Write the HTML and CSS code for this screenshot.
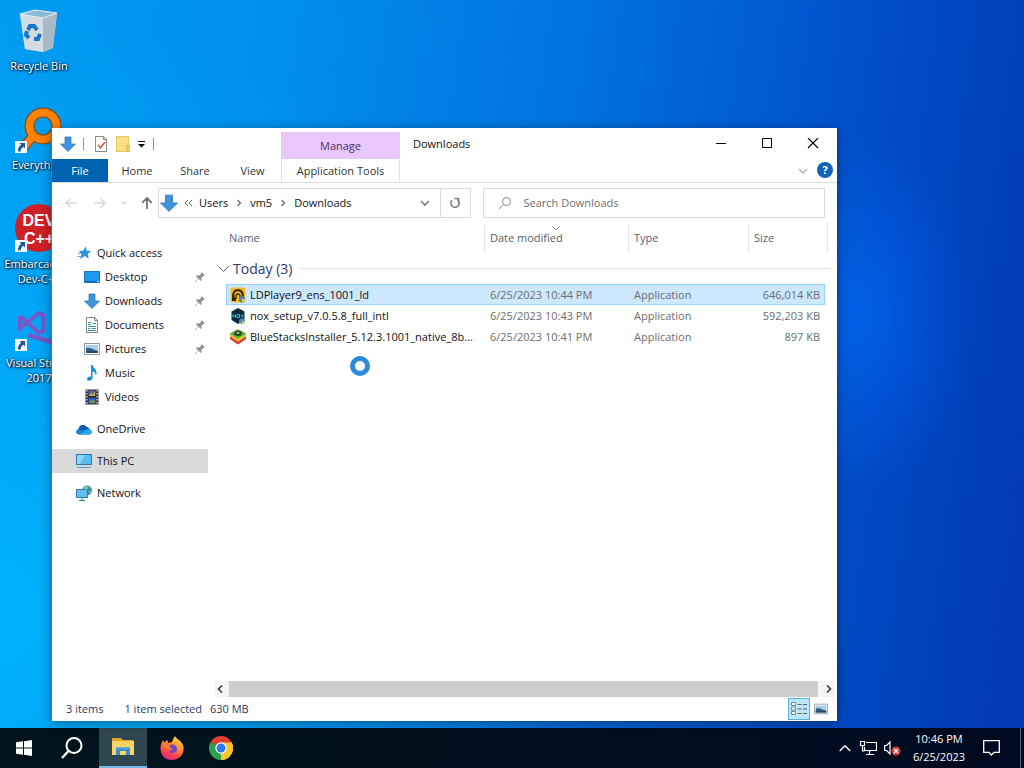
FILE: index.html
```html
<!DOCTYPE html>
<html lang="en">
<head>
<meta charset="utf-8">
<title>Downloads</title>
<link rel="stylesheet" href="styles.css">
</head>
<body>
<svg class="defs" aria-hidden="true">
  <defs>
    <symbol id="down" viewBox="0 0 16 16"><path d="M5 1h6v7h4.500L8 15.500.500 8H5z" fill="#3f93dd" stroke="#2b78c0" stroke-width=".8"/></symbol>
    <symbol id="pin" viewBox="0 0 12 12"><path d="M7.500 1l3.500 3.500-1 .6-.6-.2-2 2 .2 2.400-.9.700-2.200-2.200L1 11.200l-.3-.3L4 7.400 1.900 5.200l.8-.8 2.500.2 2-2-.2-.7z" fill="#8f959b"/></symbol>
    <symbol id="picture" viewBox="0 0 16 16"><path d="M.5 2.500h15v11H.5z" fill="#fff" stroke="#8f9aa5"/><path d="M2 4h12v8H2z" fill="#a9cdea"/><path d="M2 7l4 0 8 3v2H2z" fill="#2e6488"/><path d="M2 10h12v2H2z" fill="#284b62"/></symbol>
    <symbol id="shortcut" viewBox="0 0 12 12"><path d="M0 0h12v12H0z" fill="#f4f8fc"/><path d="M4.500 2H10v5.500L8.300 5.800C6.500 7 5.700 8.300 5.600 10.500H3C2.800 7.500 4 5.300 6.200 3.800z" fill="#22569c"/></symbol>
  </defs>
</svg>

<main class="desktop">
  <nav class="shortcuts" aria-label="Desktop">
    <a class="shortcut" href="#recycle">
      <svg class="big" viewBox="0 0 48 48"><path d="M5 8l15-4 22 3-4 35-10 4-18-3z" fill="#b9c9d4"/><path d="M5 8l23 4v34l-18-3z" fill="#d5dde2"/><path d="M28 12l14-5-4 35-10 4z" fill="#a9b9c5"/><path d="M5 8l15-4 22 3-14 5z" fill="#8cbbd6" stroke="#dfeaf0" stroke-width="1.200"/><g fill="none" stroke="#1676c5" stroke-width="4"><path d="M13 24l2-4h4l3 4M25 28l-2 5h-4M14 32l-3-3 1-4"/></g></svg>
      <span>Recycle Bin</span>
    </a>
    <a class="shortcut" href="#everything">
      <svg class="big" viewBox="0 0 48 48"><g fill="none" stroke="#8a4a12" stroke-width="10"><circle cx="28" cy="21" r="13.500"/><path d="M18 31L7 44"/></g><g fill="none" stroke="#ff8205" stroke-width="7.500"><circle cx="28" cy="21" r="13.500"/><path d="M19 30L8 43"/></g></svg>
      <svg class="arrow"><use href="#shortcut"/></svg>
      <span>Everything</span>
    </a>
    <a class="shortcut" href="#devcpp">
      <span class="big devlogo">DEV<br>C++</span>
      <svg class="arrow"><use href="#shortcut"/></svg>
      <span>Embarcadero Dev-C++</span>
    </a>
    <a class="shortcut" href="#vs">
      <svg class="big" viewBox="0 0 48 48"><g fill="none" stroke="#7857c8" stroke-width="4"><path d="M5 13v12l19-15 4 2v16l-4 2L5 13"/></g><path d="M14 30l34 10v5L12 34z" fill="#7857c8"/></svg>
      <svg class="arrow"><use href="#shortcut"/></svg>
      <span>Visual Studio 2017</span>
    </a>
  </nav>

  <section class="window" aria-label="Downloads">
    <header class="titlebar">
      <div class="quickbar">
        <svg class="i16"><use href="#down"/></svg>
        <i class="bar"></i>
        <button class="plain" aria-label="Properties"><svg class="i16" viewBox="0 0 16 16"><path d="M2.500.5h8l3 3v12h-11z" fill="#fff" stroke="#8a8a8a"/><path d="M10.500.5v3h3" fill="none" stroke="#8a8a8a"/><path d="M5 9l2.500 3L12 6" fill="none" stroke="#c8542e" stroke-width="1.300"/></svg></button>
        <button class="plain" aria-label="New folder"><svg class="i16" viewBox="0 0 16 16"><path d="M1.500.5h12v8l1 1v6h-13z" fill="#fbdf83" stroke="#ecc965"/><path d="M11.500 9.500h3v6h-3z" fill="#f4cf6a" stroke="#dfb950"/></svg></button>
        <button class="plain more" aria-label="Customize"><svg width="9" height="8" viewBox="0 0 9 8"><path d="M1 1.500h7" stroke="#000"/><path d="M1 4h7L4.500 7.500z"/></svg></button>
        <i class="bar"></i>
      </div>
      <div class="manage">Manage</div>
      <h1>Downloads</h1>
      <div class="controls">
        <button aria-label="Minimize"><svg width="12" height="12" viewBox="0 0 12 12"><path d="M1 5.500h10" stroke="#000"/></svg></button>
        <button aria-label="Maximize"><svg width="12" height="12" viewBox="0 0 12 12"><path d="M1.500.5h9v9h-9z" fill="none" stroke="#000"/></svg></button>
        <button aria-label="Close"><svg width="12" height="12" viewBox="0 0 12 12"><path d="M1 0l10 10M11 0L1 10" stroke="#000" stroke-width="1.100"/></svg></button>
      </div>
    </header>
    <div class="tabs">
      <button class="file">File</button>
      <button>Home</button>
      <button>Share</button>
      <button class="viewtab">View</button>
      <button class="tools">Application Tools</button>
      <button class="plain expand" aria-label="Expand ribbon"><svg width="10" height="8" viewBox="0 0 10 8"><path d="M1 2l4 4 4-4" fill="none" stroke="#b0b0b0" stroke-width="1.400"/></svg></button>
      <button class="help" aria-label="Help">?</button>
    </div>

    <div class="navrow">
      <div class="arrows">
        <button class="plain" aria-label="Back"><svg class="i14" viewBox="0 0 14 14"><path d="M13 7H2M6.500 2.500L2 7l4.500 4.500" fill="none" stroke="#dadada" stroke-width="1.400"/></svg></button>
        <button class="plain forward" aria-label="Forward"><svg class="i14" viewBox="0 0 14 14"><path d="M1 7h11M7.500 2.500L12 7l-4.500 4.500" fill="none" stroke="#dadada" stroke-width="1.400"/></svg></button>
        <button class="plain" aria-label="Recent"><svg width="8" height="8" viewBox="0 0 8 8"><path d="M1.500 2.500L4 5l2.500-2.500" fill="none" stroke="#dadada" stroke-width="1.300"/></svg></button>
        <button class="plain" aria-label="Up"><svg class="i14" viewBox="0 0 14 14"><path d="M7 13V2M2.200 6.800L7 2l4.800 4.800" fill="none" stroke="#707070" stroke-width="1.800"/></svg></button>
      </div>
      <div class="address">
        <svg class="i18"><use href="#down"/></svg>
        <svg width="9" height="8" viewBox="0 0 9 8"><path d="M4 1L1 4l3 3M8 1L5 4l3 3" fill="none" stroke="#666"/></svg>
        <a href="#users">Users</a>
        <svg width="6" height="8" viewBox="0 0 6 8"><path d="M1.500 1l3 3-3 3" fill="none" stroke="#666" stroke-width="1.200"/></svg>
        <a class="sub" href="#vm5">vm5</a>
        <svg width="6" height="8" viewBox="0 0 6 8"><path d="M1.500 1l3 3-3 3" fill="none" stroke="#666" stroke-width="1.200"/></svg>
        <a class="sub" href="#downloads">Downloads</a>
        <button class="plain history" aria-label="Previous locations"><svg width="10" height="8" viewBox="0 0 10 8"><path d="M1 2l4 4 4-4" fill="none" stroke="#808080" stroke-width="1.600"/></svg></button>
        <button class="refresh" aria-label="Refresh"><svg width="12" height="12" viewBox="0 0 12 12"><path d="M3 3.200A4.200 4.200 0 1 0 8.500 2.700" fill="none" stroke="#777" stroke-width="1.500"/><path d="M5.500 1.500h4v4" fill="none" stroke="#777" stroke-width="1.500"/></svg></button>
      </div>
      <label class="search">
        <svg width="14" height="14" viewBox="0 0 14 14"><circle cx="8.500" cy="5.500" r="4" fill="none" stroke="#8a8a8a"/><path d="M5.600 8.400L1 13" stroke="#8a8a8a"/></svg>
        <input type="text" placeholder="Search Downloads" aria-label="Search Downloads">
      </label>
    </div>

    <div class="body">
      <nav class="tree" aria-label="Folders">
        <a class="root" href="#quick"><svg class="i16" viewBox="0 0 16 16"><path d="M9.500 1.500l1.300 4.300 4.600.2-3.800 2.900 1.200 4.800L9 11l-5 3 1.600-4.800L2.800 6l4.400-.2z" fill="#2a93dc"/><path d="M2 8.500h4M1.500 11.500h4" stroke="#5eb4ea"/></svg>Quick access</a>
        <a href="#desktop"><svg class="i16" viewBox="0 0 16 16"><path d="M.5 2.500h15v11H.5z" fill="#1e97f2" stroke="#1673bd"/><path d="M1 12.500h12" stroke="#1565ac"/><path d="M13 12.500h2" stroke="#d7efff"/></svg>Desktop<svg class="pin"><use href="#pin"/></svg></a>
        <a href="#dl"><svg class="i16"><use href="#down"/></svg>Downloads<svg class="pin"><use href="#pin"/></svg></a>
        <a href="#docs"><svg class="i16" viewBox="0 0 16 16"><path d="M2.500.5h8l3 3v12h-11z" fill="#fff" stroke="#7d8790"/><path d="M10.500.5v3h3" fill="none" stroke="#7d8790"/><path d="M4 7.500h3M4 5.500h3M8.500 6.500H12M4 9.500h8M4 11.500h2M7.500 11.500H12M4 13.500h8" stroke="#3c91a6"/></svg>Documents<svg class="pin"><use href="#pin"/></svg></a>
        <a href="#pics"><svg class="i16"><use href="#picture"/></svg>Pictures<svg class="pin"><use href="#pin"/></svg></a>
        <a href="#music"><svg class="i16" viewBox="0 0 16 16"><path d="M7 0h1.500c.5 3 4.500 4 4 8.500-.2 1-.7 1.500-1 2 .2-2.500-1-3.500-3-4V13c0 3-5.500 4-5.500 1 0-2 2.500-3 4-2.300z" fill="#1690dc"/></svg>Music</a>
        <a href="#videos"><svg class="i16" viewBox="0 0 16 16"><path d="M1.500.5h13v15h-13z" fill="#2b2d38"/><path d="M4.500 1.500h7V7h-7z" fill="#54659a"/><path d="M4.500 9h7v5.500h-7z" fill="#2f62c8"/><path d="M5 6.500l2.500-3L9 6l2-4v5H5z" fill="#c2b04a"/><path d="M5 14l2-3 4 1v2z" fill="#7a9a50"/><path d="M3 1v14M13 1v14" stroke="#e8e8e8" stroke-width="1.200" stroke-dasharray="1.500 1.500"/></svg>Videos</a>
        <a class="root" href="#onedrive"><svg class="i16" viewBox="0 0 16 16"><path d="M3 13.500C-.8 13.500-.8 8.500 2.600 8 3.200 3.500 8.500 2.500 10.500 6c1.200-.2 2.300.6 2.600 2 3.500.5 3.500 5.500 0 5.500z" fill="#1484dc"/><path d="M2.600 8C3.200 3.500 8.500 2.500 10.500 6c1.200-.2 2.300.6 2.600 2L9 9.500z" fill="#0a5cb0"/><path d="M3 13.500l7-4.500c3-1.700 5.800 0 5.600 2.300-.1 1.500-1.200 2.200-2.500 2.200z" fill="#2aa4ed"/></svg>OneDrive</a>
        <a class="root current" href="#pc"><svg class="i16" viewBox="0 0 16 16"><path d="M.5 1.500h15v10H.5z" fill="#56bdf0" stroke="#35759c"/><path d="M1 2h8L4 11H1z" fill="#8ad6fa"/><path d="M1 14.500h14" stroke="#5a9fd0"/></svg>This PC</a>
        <a class="root" href="#network"><svg class="i16" viewBox="0 0 16 16"><circle cx="11" cy="5.500" r="5" fill="#3f8fa8"/><path d="M8 2c2-2 5 0 4 2s-3 1-4 0M13 6l2.500 0-1 3z" fill="#86c9a8"/><path d="M.5 4.500h11v8H.5z" fill="#5fc0f0" stroke="#2e7cab"/><path d="M6 13v2M3 15.500h6" stroke="#2e7cab"/></svg>Network</a>
      </nav>

      <div class="pane">
        <div class="list">
          <table>
            <colgroup><col><col class="c-date"><col class="c-type"><col class="c-size"></colgroup>
            <thead>
              <tr><th>Name</th><th class="sorted">Date modified<svg width="8" height="5" viewBox="0 0 8 5"><path d="M.5.5L4 4 7.500.5" fill="none" stroke="#777"/></svg></th><th>Type</th><th>Size</th></tr>
            </thead>
            <tbody>
              <tr class="group"><td colspan="4"><div><svg width="11" height="8" viewBox="0 0 11 8"><path d="M.5 1.500l5 5 5-5" fill="none" stroke="#555"/></svg><b>Today (3)</b><hr></div></td></tr>
              <tr class="selected"><td><div class="name"><svg class="i16" viewBox="0 0 16 16"><rect x=".5" y=".5" width="15" height="15" rx="2" fill="#f5bd1b"/><path d="M3.200 12V8a4.800 4.800 0 0 1 9.600 0v3" fill="none" stroke="#302414" stroke-width="2.200"/><path d="M6 12V9a2 2 0 0 1 4 0v2" fill="none" stroke="#302414" stroke-width="1.300"/><path d="M2 10.500h4V14H2z" fill="#302414"/><path d="M9 10.500l3-2 3 2v4l-3 1.500-3-1.500z" fill="#4c83b8"/><path d="M12 12h3v2.500L12 16z" fill="#ecc94d"/></svg>LDPlayer9_ens_1001_ld</div></td><td>6/25/2023 10:44 PM</td><td>Application</td><td>646,014 KB</td></tr>
              <tr><td><div class="name"><svg class="i16" viewBox="0 0 16 16"><path d="M8 0l6.500 3.500v8L8 16l-6.500-4V3.500z" fill="#0e2b3e"/><path d="M3 9.500v-3l2.500 3v-3M7 6.500h2.500v3H7zM11 6.500l2.500 3M13.500 6.500l-2.500 3" fill="none" stroke="#35b5c9"/><path d="M9 12l3-2 3 2v2.500L12 16l-3-1.500z" fill="#5189b9"/><path d="M12 13h3v1.500L12 16z" fill="#d4c467"/></svg>nox_setup_v7.0.5.8_full_intl</div></td><td>6/25/2023 10:43 PM</td><td>Application</td><td>592,203 KB</td></tr>
              <tr><td><div class="name"><svg class="i16" viewBox="0 0 16 16"><path d="M0 10l8 5.500 8-5.500V8H0z" fill="#d5332d"/><path d="M0 7.500L8 13l8-5.500V6H0z" fill="#f5b52a"/><path d="M0 5.500l8 5.500 8-5.500v-1H0z" fill="#b9d44a"/><path d="M0 4.500L8 0l8 4.500-8 5z" fill="#59a532"/><ellipse cx="8" cy="4.500" rx="3.600" ry="2.400" fill="#25401f"/><ellipse cx="8" cy="4" rx="1.600" ry="1" fill="#9fd0dd"/></svg>BlueStacksInstaller_5.12.3.1001_native_8b...</div></td><td>6/25/2023 10:41 PM</td><td>Application</td><td>897 KB</td></tr>
            </tbody>
          </table>
        </div>
        <div class="scroll">
          <button class="left" aria-label="Scroll left"><svg width="6" height="8" viewBox="0 0 6 8"><path d="M5 .5L1.500 4 5 7.500" fill="none" stroke="#444" stroke-width="1.700"/></svg></button>
          <div class="thumb"></div>
          <button class="right" aria-label="Scroll right"><svg width="6" height="8" viewBox="0 0 6 8"><path d="M1 .5L4.500 4 1 7.500" fill="none" stroke="#444" stroke-width="1.700"/></svg></button>
        </div>
      </div>
    </div>

    <footer class="status">
      <span>3 items</span>
      <span class="picked">1 item selected</span>
      <span>630 MB</span>
      <button class="view on" aria-label="Details"><svg width="16" height="14" viewBox="0 0 16 14"><path d="M.5.500h4v3h-4zM.5 5h4v3h-4zM.5 9.500h4v3h-4z" fill="#fff" stroke="#6d8996"/><path d="M6.500 2.500h4M12 2.500h4M6.500 7h4M12 7h4M6.500 11.500h4M12 11.500h4" stroke="#4c6570"/></svg></button>
      <button class="view" aria-label="Large icons"><svg width="14" height="14"><use href="#picture"/></svg></button>
    </footer>
  </section>
  <span class="busy" role="status" aria-label="Busy"></span>
</main>

<footer class="taskbar">
  <button class="task" aria-label="Start"><svg width="16" height="16" viewBox="0 0 16 16"><path d="M0 2.300L7 1.300v6.200H0zM8 1.200L16 0v7.500H8zM0 8.500h7v6.200l-7-1zM8 8.500h8V16l-8-1.200z" fill="#fff"/></svg></button>
  <button class="task find" aria-label="Search"><svg width="22" height="22" viewBox="0 0 22 22"><circle cx="13" cy="8.500" r="7.500" fill="none" stroke="#fff" stroke-width="2"/><path d="M7.700 13.800L1 21" stroke="#fff" stroke-width="2.300"/></svg></button>
  <button class="task active" aria-label="File Explorer"><svg width="22" height="20" viewBox="0 0 22 20"><path d="M0 1h9l2 2h10v4H0z" fill="#e4a32b"/><path d="M0 4h22v14H0z" fill="#fcd462"/><path d="M4 18v-8h14v8h-4v-4H8v4z" fill="#3b8fc9"/><path d="M4 10h14v2H4z" fill="#59a9d9"/></svg></button>
  <button class="task" aria-label="Firefox"><svg width="24" height="24" viewBox="0 0 24 24"><defs><linearGradient id="ff" x1=".8" y1="0" x2=".3" y2="1"><stop offset="0" stop-color="#ffe14a"/><stop offset=".45" stop-color="#ff8a2a"/><stop offset=".8" stop-color="#ff3852"/><stop offset="1" stop-color="#e0268c"/></linearGradient></defs><path d="M15 0c1 3 6 4 8 9 2.500 8-3 15-11 15S-.5 18 .7 10C1 7.500 2 5.500 3.500 4l.5 2.500L7.500 4 8 7l4-1c1-2.500 1.500-4 3-6z" fill="url(#ff)"/><path d="M7.500 10C10 7 16 8 17 12c1 5-6 7-8.500 3l4-1-1-2z" fill="#7546c9"/><path d="M3 8c2-2 4-1.500 5-1l4 .5c-1 2-3 2-3 3l1 1.500c-2 1-3 2-2.500 3z" fill="#ff7c2b"/></svg></button>
  <button class="task" aria-label="Chrome"><svg width="24" height="24" viewBox="0 0 24 24"><path d="M12 12L1.600 6A12 12 0 0 1 22.400 6z" fill="#e63e31"/><path d="M12 12l10.400-6A12 12 0 0 1 12 24z" fill="#fcc62b"/><path d="M12 12v12A12 12 0 0 1 1.600 6z" fill="#2da04b"/><path d="M12 6.500h10.700A12 12 0 0 1 12 24l5-9z" fill="#fcc62b"/><circle cx="12" cy="12" r="5.700" fill="#fff"/><circle cx="12" cy="12" r="4.500" fill="#2d79ea"/></svg></button>
  <div class="tray">
    <button class="hidden-icons" aria-label="Show hidden icons"><svg width="12" height="8" viewBox="0 0 12 8"><path d="M.7 7L6 1.700 11.300 7" fill="none" stroke="#fff" stroke-width="1.400"/></svg></button>
    <button class="plain" aria-label="Network"><svg width="17" height="14" viewBox="0 0 17 14"><path d="M6 1.500h10.500v8h-12V6M9.500 10v3M6 13.500h8" fill="none" stroke="#fff" stroke-width="1.200"/><path d="M.5.500h4v4h-4zM2.500 5v5h2" fill="none" stroke="#fff" stroke-width="1.200"/></svg></button>
    <button class="plain" aria-label="Volume muted"><svg width="17" height="15" viewBox="0 0 17 15"><path d="M.7 4.500h2L6 1v12L2.700 9.500h-2z" fill="none" stroke="#fff" stroke-width="1.200"/><circle cx="12" cy="10" r="4.500" fill="#d23c3c"/><path d="M10 8l4 4M14 8l-4 4" stroke="#fff" stroke-width="1.300"/></svg></button>
    <div class="clock"><span>10:46 PM</span><span>6/25/2023</span></div>
    <button class="plain notes" aria-label="Notifications"><svg width="17" height="16" viewBox="0 0 17 16"><path d="M.7.700h15.600v11.600H11L8.500 15 6 12.300H.7z" fill="none" stroke="#fff" stroke-width="1.300"/></svg></button>
    <i class="peek"></i>
  </div>
</footer>
</body>
</html>
```
FILE: styles.css
```css
* { box-sizing: border-box; }
body {
  margin: 0;
  height: 100vh;
  display: flex;
  flex-direction: column;
  overflow: hidden;
  font: 11px/16px "Open Sans", "Noto Sans", sans-serif;
  color: #111;
  background:
    radial-gradient(ellipse 110px 180px at 84% 41%, rgba(0, 110, 255, .55), rgba(0, 90, 240, 0)),
    radial-gradient(ellipse 600px 600px at 0 80%, rgba(0, 184, 255, .8), rgba(0, 170, 255, 0)),
    linear-gradient(98deg, #009cf2 0, #008eec 25%, #0074e0 50%, #0056ce 72%, #0042bc 88%, #0438b2 100%);
}
button {
  font: inherit;
  color: inherit;
  border: 0;
  padding: 0;
  background: none;
  display: flex;
  align-items: center;
  justify-content: center;
}
a { color: inherit; text-decoration: none; }
svg { display: block; flex: none; }
.defs { position: absolute; width: 0; height: 0; }
.i14 { width: 14px; height: 14px; }
.i16 { width: 16px; height: 16px; }
.i18 { width: 18px; height: 18px; }

/* desktop */
.desktop { flex: 1; position: relative; min-height: 0; }
.shortcuts { width: 78px; padding-top: 6px; }
.shortcut {
  position: relative;
  height: 99px;
  display: flex;
  flex-direction: column;
  align-items: center;
  gap: 4px;
  text-align: center;
  line-height: 15px;
  color: #fff;
  text-shadow: 1px 1px 2px #000, 0 0 3px #003;
}
.big { width: 48px; height: 48px; }
.arrow { position: absolute; left: 15px; top: 36px; width: 12px; height: 12px; }
.devlogo {
  border-radius: 50%;
  background: #cf2028;
  font: bold 16px/18px "Liberation Sans", sans-serif;
  padding-top: 8px;
  text-shadow: none;
}
.busy {
  position: absolute;
  left: 350px;
  top: 356px;
  width: 20px;
  height: 20px;
  border: 5px solid #2b8bdc;
  border-radius: 50%;
  background: #fff;
}

/* window */
.window {
  position: absolute;
  inset: 128px 187px 7px 51px;
  display: flex;
  flex-direction: column;
  border: 1px solid #1b83c6;
  border-width: 0 0 0 1px;
  background: #fff;
  box-shadow: 0 2px 10px rgba(0, 0, 0, .4);
}
.titlebar { display: flex; height: 31px; }
.quickbar { width: 229px; display: flex; align-items: center; padding-left: 8px; gap: 6px; }
.bar { width: 1px; height: 12px; margin: 0 3px 0 1px; background: #999; }
.more { width: 9px; }
.manage {
  width: 119px;
  margin-top: 4px;
  line-height: 28px;
  text-align: center;
  background: #e8c8fb;
  color: #4c2f63;
}
.titlebar h1 { margin: 0; padding-left: 13px; flex: 1; font-size: 11px; line-height: 32px; font-weight: 400; }
.controls { display: flex; padding-right: 1px; }
.controls button { width: 46px; }
.tabs { display: flex; height: 24px; border-bottom: 1px solid #dadbdc; color: #333; }
.tabs button { width: 58px; }
.tabs .file { width: 56px; background: #0063b1; color: #fff; }
.tabs .viewtab { width: 57px; }
.tabs .tools { width: 119px; border: solid #e6dcea; border-width: 0 1px; }
.tabs .expand { width: 18px; margin-left: auto; }
.tabs .help {
  width: 16px;
  height: 16px;
  margin: 3px 4px 0 5px;
  border-radius: 50%;
  background: #0f65b8;
  color: #fff;
  font-weight: 700;
}
.navrow { display: flex; padding: 5px 12px 0; }
.arrows { flex: none; width: 94px; display: flex; align-items: center; gap: 12px; }
.forward { margin: 0 1px 0 3px; }
.address, .search { height: 30px; border: 1px solid #d9d9d9; display: flex; align-items: center; min-width: 0; }
.address { flex: 1 1 312px; gap: 6px; padding-left: 1px; margin-right: 12px; }
.address a { margin-right: 2px; }
.address .sub { margin-left: 2px; }
.history { margin-left: auto; width: 18px; }
.refresh { width: 30px; height: 28px; border-left: 1px solid #d9d9d9; }
.search { flex: 1 1 342px; padding-left: 14px; gap: 12px; }
.search input { flex: 1; min-width: 0; border: 0; outline: 0; padding: 0; font: inherit; background: none; }
.search input::placeholder { color: #6d6d6d; opacity: 1; }

.body { flex: 1; display: flex; min-height: 0; }
.tree { width: 156px; padding-top: 23px; }
.tree a { display: flex; align-items: center; gap: 5px; height: 24px; padding: 0 2px 0 32px; }
.tree .root { padding-left: 24px; }
.tree a + .root { margin-top: 8px; }
.tree .current { background: #d9d9d9; }
.pin { width: 12px; height: 12px; margin-left: auto; }
.pane { flex: 1; min-width: 0; display: flex; flex-direction: column; margin-left: 7px; }
.list { flex: 1; padding: 5px 12px 0 11px; }
table { width: 100%; table-layout: fixed; border-collapse: separate; border-spacing: 0; }
.c-date { width: 144px; }
.c-type { width: 120px; }
.c-size { width: 77px; }
th, td { padding: 0 0 0 6px; text-align: left; font-weight: 400; color: #6d6d6d; white-space: nowrap; }
th { height: 30px; color: #55606d; position: relative; border-left: 1px solid #e5e5e5; padding-left: 5px; }
th:first-child { border: 0; padding-left: 3px; }
th:last-child::after { content: ""; position: absolute; right: -3px; top: 0; bottom: 0; width: 1px; background: #e5e5e5; }
.sorted svg { position: absolute; left: 50%; top: 3px; margin-left: -5px; }
td { height: 21px; }
td:first-child { padding-left: 4px; color: #111; }
td:last-child { padding-right: 5px; text-align: right; }
.name { display: flex; align-items: center; gap: 4px; }
.group td { height: 31px; padding: 0; }
.group div { display: flex; align-items: center; gap: 4px; margin: 0 -5px 0 -8px; }
.group b { font-size: 14px; line-height: 20px; font-weight: 400; color: #2b3b6b; }
.group hr { flex: 1; margin: 0 0 0 4px; border: 0; border-top: 1px solid #e2e2e2; }
.selected td { background: #cce8ff; border: solid #99d1ff; border-width: 1px 0; }
.selected td:first-child { border-left-width: 1px; padding-left: 3px; }
.selected td:last-child { border-right-width: 1px; padding-right: 4px; }
.scroll { display: flex; height: 16px; padding-right: 2px; }
.scroll button { background: #f4f4f4; }
.left { width: 14px; padding-right: 4px; }
.right { width: 17px; padding-left: 4px; }
.thumb { flex: 1; background: #cdcdcd; }
.status { display: flex; align-items: center; height: 24px; padding: 0 5px 0 14px; color: #2b3a5c; }
.picked { margin: 0 8px 0 21px; }
.view { width: 22px; height: 22px; }
.view.on { margin-left: auto; background: #bfe6f7; border: 1px solid #5eb2d8; }

/* taskbar */
.taskbar { height: 40px; display: flex; gap: 1px; background: linear-gradient(90deg, #00141e, #000f1e 60%, #000a20); color: #fff; }
.task { width: 48px; }
.find { width: 49px; padding-right: 3px; }
.active { background: #2e4650; border-bottom: 2px solid #76b9ed; }
.tray { margin-left: auto; display: flex; align-items: center; gap: 7px; }
.hidden-icons { margin-right: 2px; }
.clock { width: 62px; text-align: center; line-height: 18px; margin-right: 2px; }
.clock span { display: block; }
.notes { width: 24px; }
.peek { width: 1px; height: 40px; margin: 0 3px 0 10px; background: #5b6470; }
```
